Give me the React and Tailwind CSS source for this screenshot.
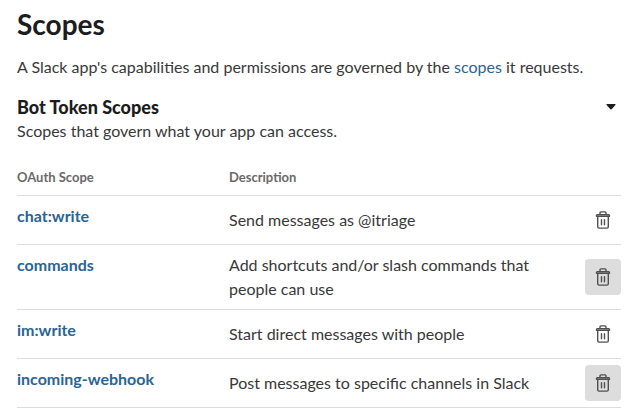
const scopes = [
  { name: "chat:write", description: "Send messages as @itriage", active: false },
  { name: "commands", description: "Add shortcuts and/or slash commands that people can use", active: true },
  { name: "im:write", description: "Start direct messages with people", active: false },
  { name: "incoming-webhook", description: "Post messages to specific channels in Slack", active: true },
];

function TrashIcon() {
  return (
    <svg width="16" height="18" viewBox="0 0 16 18" fill="none" stroke="#505052" strokeWidth="1.4" strokeLinecap="round" strokeLinejoin="round">
      <path d="M1.5 5.3V4.4q0-.8.8-.8h11.4q.8 0 .8.8v.9zM5 3.4V1.9q0-1 1-1h4q1 0 1 1v1.5M2.7 5.5v10.2q0 1.4 1.4 1.4h7.8q1.4 0 1.4-1.4V5.5M6.5 8.7v5M9.5 8.7v5" />
    </svg>
  );
}

function ScopeRow({ name, description, active }) {
  return (
    <div className="grid grid-cols-[212px_320px_1fr] border-b border-[#dddddd] py-[6px]">
      <a className="pt-[2px] text-[16px] leading-[24px] font-bold text-[#2a6496]">{name}</a>
      <p className="self-center py-[2px] pr-4 text-[16px] leading-[24px] text-[#38383a]">{description}</p>
      <button aria-label={`Remove ${name}`} className={`flex h-9 w-9 items-center justify-center self-center justify-self-end rounded ${active ? "bg-[#dddddd]" : "bg-white"}`}>
        <TrashIcon />
      </button>
    </div>
  );
}

export default function App() {
  return (
    <main className="h-[415px] overflow-hidden bg-white pr-4 pl-[17px] font-['Lato',sans-serif] text-[#1d1c1d]">
      <h1 className="pt-[7px] text-[28px] leading-[34px] font-bold">Scopes</h1>
      <p className="mt-[14px] text-[16px] leading-[24px] text-[#38383a]">
        A Slack app's capabilities and permissions are governed by the <a className="text-[#2a6496]">scopes</a> it requests.
      </p>
      <div className="mt-[16px] flex items-center justify-between">
        <h2 className="text-[18px] leading-[24px] font-black">Bot Token Scopes</h2>
        <svg className="mr-[5px]" width="10" height="6" viewBox="0 0 10 6">
          <path d="M1 0h8q1 0 .4.9L5.8 5.1q-.8.9-1.6 0L.6.9Q0 0 1 0z" fill="#1d1c1d" />
        </svg>
      </div>
      <p className="text-[16px] leading-[24px] text-[#38383a]">Scopes that govern what your app can access.</p>
      <div className="mt-[24px] grid grid-cols-[212px_1fr] border-b border-[#dddddd] pb-[7px] text-[13px] leading-[21px] font-bold text-[#6a696a]">
        <span>OAuth Scope</span>
        <span>Description</span>
      </div>
      {scopes.map((scope) => (
        <ScopeRow key={scope.name} {...scope} />
      ))}
    </main>
  );
}
